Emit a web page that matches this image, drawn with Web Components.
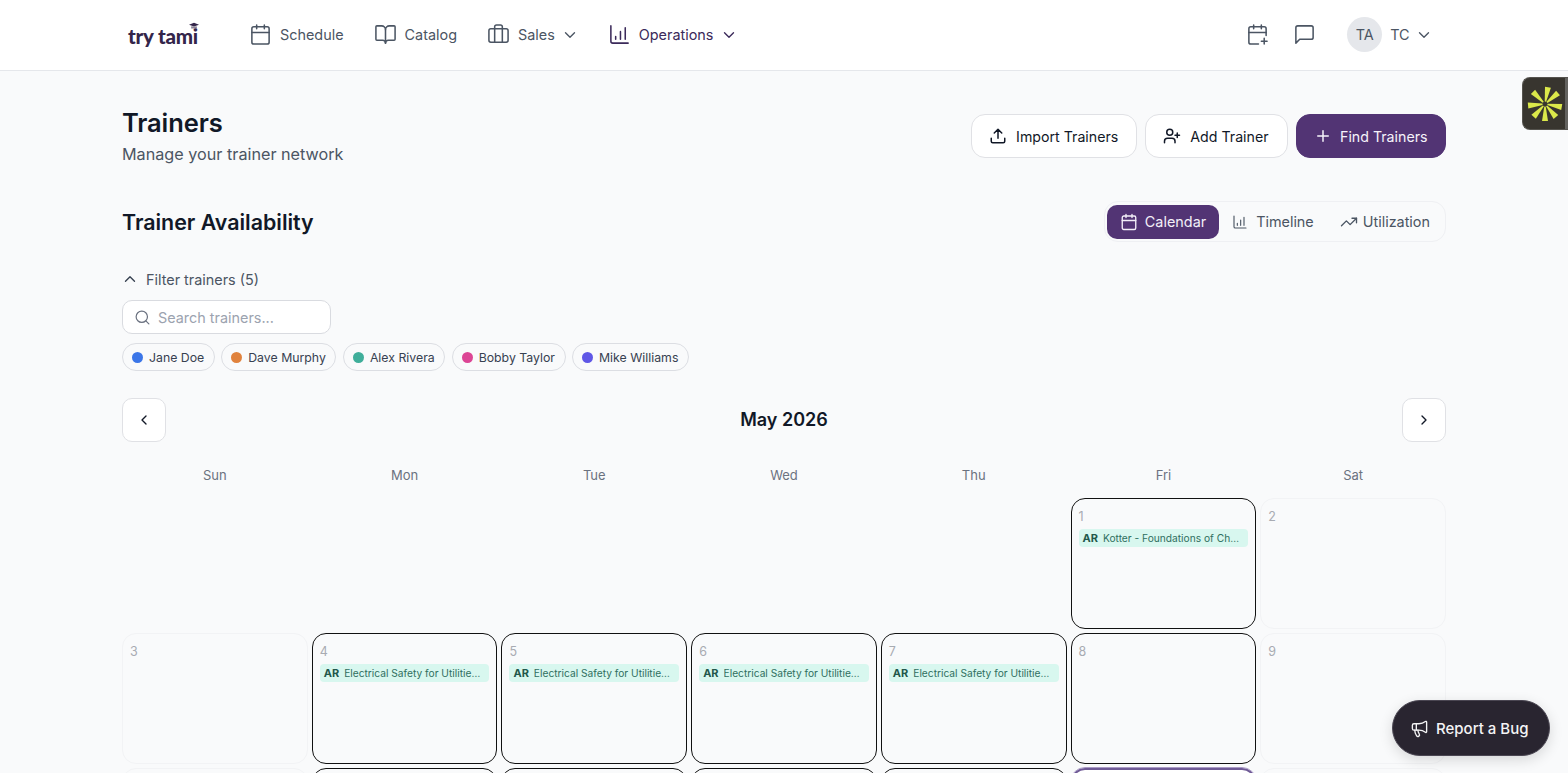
<!DOCTYPE html>
<html>
<head>
<meta charset="utf-8">
<title>Trainers</title>
<style>
  html, body { margin: 0; height: 100%; overflow: hidden; background: #f9fafb; }
  body { font-family: Inter, "Liberation Sans", sans-serif; color: #111827; position: relative; }
</style>
</head>
<body>
<app-header></app-header>
<main-page></main-page>
<side-widget></side-widget>
<bug-button></bug-button>

<script>
// shared icon paths, all on a 24 box with stroke
const ICONS = {
  calendar: '<path d="M8 2v4M16 2v4"/><rect x="3" y="4" width="18" height="18" rx="2"/><path d="M3 10h18"/>',
  calendarPlus: '<path d="M8 2v4M16 2v4"/><path d="M21 13V6a2 2 0 0 0-2-2H5a2 2 0 0 0-2 2v14a2 2 0 0 0 2 2h8"/><path d="M3 10h18M16 19h6M19 16v6"/>',
  book: '<path d="M12 7v14"/><path d="M3 18a1 1 0 0 1-1-1V4a1 1 0 0 1 1-1h5a4 4 0 0 1 4 4 4 4 0 0 1 4-4h5a1 1 0 0 1 1 1v13a1 1 0 0 1-1 1h-6a3 3 0 0 0-3 3 3 3 0 0 0-3-3z"/>',
  briefcase: '<path d="M16 20V4a2 2 0 0 0-2-2h-4a2 2 0 0 0-2 2v16"/><rect x="2" y="6" width="20" height="14" rx="2"/>',
  chart: '<path d="M3 3v16a2 2 0 0 0 2 2h16"/><path d="M8 17v-3M13 17V9M18 17V5"/>',
  chevronDown: '<path d="m6 9 6 6 6-6"/>',
  chevronUp: '<path d="m18 15-6-6-6 6"/>',
  chevronLeft: '<path d="m15 18-6-6 6-6"/>',
  chevronRight: '<path d="m9 18 6-6-6-6"/>',
  message: '<path d="M21 15a2 2 0 0 1-2 2H7l-4 4V5a2 2 0 0 1 2-2h14a2 2 0 0 1 2 2z"/>',
  upload: '<path d="M21 15v4a2 2 0 0 1-2 2H5a2 2 0 0 1-2-2v-4"/><path d="m17 8-5-5-5 5M12 3v12"/>',
  userPlus: '<path d="M16 21v-2a4 4 0 0 0-4-4H6a4 4 0 0 0-4 4v2"/><circle cx="9" cy="7" r="4"/><path d="M19 8v6M22 11h-6"/>',
  plus: '<path d="M5 12h14M12 5v14"/>',
  trending: '<path d="m22 7-8.5 8.5-5-5L2 17"/><path d="M16 7h6v6"/>',
  search: '<circle cx="11" cy="11" r="8"/><path d="m21 21-4.3-4.3"/>',
  megaphone: '<path d="M11 6a13 13 0 0 0 8.4-2.8A1 1 0 0 1 21 4v12a1 1 0 0 1-1.6.8A13 13 0 0 0 11 14H5a2 2 0 0 1-2-2V8a2 2 0 0 1 2-2z"/><path d="M6 14a12 12 0 0 0 2.4 7.2 2 2 0 0 0 3.2-2.4A8 8 0 0 1 10 14"/><path d="M8 6v8"/>'
};

class UiIcon extends HTMLElement {
  connectedCallback() {
    const size = this.getAttribute('size') || 16;
    const sw = this.getAttribute('stroke') || 2;
    this.attachShadow({ mode: 'open' }).innerHTML = `
      <style>:host { display: inline-flex; flex: none; } svg { display: block; }</style>
      <svg xmlns="http://www.w3.org/2000/svg" width="${size}" height="${size}" viewBox="0 0 24 24" fill="none"
        stroke="currentColor" stroke-width="${sw}" stroke-linecap="round" stroke-linejoin="round">${ICONS[this.getAttribute('name')]}</svg>`;
  }
}
customElements.define('ui-icon', UiIcon);

class NavItem extends HTMLElement {
  connectedCallback() {
    const menu = this.hasAttribute('menu');
    this.attachShadow({ mode: 'open' }).innerHTML = `
      <style>
        :host { display: flex; align-items: center; gap: 8px; color: #4b5563; font-size: 14.4px; margin-top: -1px; }
        :host([active]) { color: #3b2a5a; }
        .chev { margin: 0 -1.5px 0 -1.5px; }
      </style>
      <ui-icon name="${this.getAttribute('icon')}" size="23" stroke="1.6"></ui-icon>
      <slot></slot>
      ${menu ? '<ui-icon class="chev" name="chevronDown" size="18" stroke="1.8"></ui-icon>' : ''}`;
  }
}
customElements.define('nav-item', NavItem);

class AppHeader extends HTMLElement {
  connectedCallback() {
    this.attachShadow({ mode: 'open' }).innerHTML = `
      <style>
        :host { display: flex; align-items: center; height: 70px; background: #fff;
          border-bottom: 1px solid #e5e7eb; padding: 0 135px 0 128px; box-sizing: content-box; }
        .logo { position: relative; font: 900 20.5px/1 "Lato", "Open Sans", sans-serif; color: #33254a;
          letter-spacing: -.2px; width: 121px; flex: none; margin-top: 2px; }
        .cap { position: absolute; left: 61px; top: -4px; }
        nav { display: flex; gap: 30px; align-items: center; }
        .right { margin-left: auto; display: flex; align-items: center; color: #4b5563; margin-top: -1px; }
        .right .msg { margin-left: 24px; }
        .avatar { width: 35px; height: 35px; border-radius: 50%; background: #e5e7eb; display: flex;
          align-items: center; justify-content: center; font-size: 14.4px; margin-left: 31px; }
        .tc { font-size: 14.4px; margin-left: 8px; margin-right: 5.5px; }
      </style>
      <div class="logo">try tami<svg class="cap" width="10" height="8" viewBox="0 0 14 9"><path d="M7 0l7 2.6-7 2.6L0 2.6z" fill="#33254a"/><path d="M3 5h8v3H3z" fill="#8a8296"/></svg></div>
      <nav>
        <nav-item icon="calendar">Schedule</nav-item>
        <nav-item icon="book">Catalog</nav-item>
        <nav-item icon="briefcase" menu>Sales</nav-item>
        <nav-item icon="chart" menu active>Operations</nav-item>
      </nav>
      <div class="right">
        <ui-icon name="calendarPlus" size="23" stroke="1.6"></ui-icon>
        <ui-icon class="msg" name="message" size="23" stroke="1.6"></ui-icon>
        <div class="avatar">TA</div>
        <span class="tc">TC</span>
        <ui-icon name="chevronDown" size="18" stroke="1.8"></ui-icon>
      </div>`;
  }
}
customElements.define('app-header', AppHeader);

class ActionButton extends HTMLElement {
  connectedCallback() {
    this.attachShadow({ mode: 'open' }).innerHTML = `
      <style>
        :host { display: inline-flex; align-items: center; gap: 9px; height: 44px; box-sizing: border-box;
          padding: 0 18px 0 17px; border-radius: 14px; border: 1px solid #e0e1e5; background: #fff;
          color: #111827; font-size: 14.2px; font-weight: 400; white-space: nowrap; }
        :host([primary]) { background: #523474; border-color: #523474; color: #f6f3fa; padding: 0 17.5px; gap: 8px; }
      </style>
      <ui-icon name="${this.getAttribute('icon')}" size="18"></ui-icon>
      <slot></slot>`;
  }
}
customElements.define('action-button', ActionButton);

class ViewToggle extends HTMLElement {
  connectedCallback() {
    this.attachShadow({ mode: 'open' }).innerHTML = `
      <style>
        :host { display: flex; align-items: center; height: 41px; box-sizing: border-box; padding: 0 2px;
          border: 1px solid #eff0f3; border-radius: 14px; background: #f9fafb; }
        .opt { display: flex; align-items: center; height: 34px; padding: 0 13px; border-radius: 10px;
          font-size: 14.4px; color: #4b5563; }
        .on { background: #523474; color: #f3eff8; gap: 7px; }
        .tl { gap: 8px; }
        .ut { gap: 5px; }
      </style>
      <div class="opt on"><ui-icon name="calendar" size="18" stroke="1.8"></ui-icon>Calendar</div>
      <div class="opt tl"><ui-icon name="chart" size="16" stroke="1.7"></ui-icon>Timeline</div>
      <div class="opt ut"><ui-icon name="trending" size="18" stroke="1.8"></ui-icon>Utilization</div>`;
  }
}
customElements.define('view-toggle', ViewToggle);

class TrainerChip extends HTMLElement {
  connectedCallback() {
    this.attachShadow({ mode: 'open' }).innerHTML = `
      <style>
        :host { display: inline-flex; align-items: center; gap: 6px; height: 28px; box-sizing: border-box;
          padding: 0 9.5px 0 9px; border: 1px solid #dcdee3; border-radius: 14px; font-size: 12.3px; color: #374151;
          white-space: nowrap; }
        i { width: 11px; height: 11px; border-radius: 50%; background: ${this.getAttribute('color')}; }
      </style>
      <i></i><slot></slot>`;
  }
}
customElements.define('trainer-chip', TrainerChip);

class RoundButton extends HTMLElement {
  connectedCallback() {
    this.attachShadow({ mode: 'open' }).innerHTML = `
      <style>
        :host { display: flex; align-items: center; justify-content: center; width: 44px; height: 44px;
          box-sizing: border-box; border: 1px solid #e0e1e5; border-radius: 10px; background: #fff; color: #111827; }
      </style>
      <ui-icon name="${this.getAttribute('icon')}" size="16"></ui-icon>`;
  }
}
customElements.define('round-button', RoundButton);

class DayCell extends HTMLElement {
  connectedCallback() {
    const ev = this.getAttribute('event');
    this.attachShadow({ mode: 'open' }).innerHTML = `
      <style>
        :host { display: block; height: 131px; box-sizing: border-box; border: 1px solid #f2f3f5; border-radius: 14px;
          padding: 10px 7px 0 7px; overflow: hidden; min-width: 0; }
        :host([avail]) { border: 1.5px solid #111; }
        :host([today]) { border: 2px solid #6f5a96; outline: 1px solid #a999c6; background: #fff; }
        :host([blank]) { border-color: transparent; }
        .num { font-size: 12.5px; line-height: 15px; color: #a8abb2; }
        .ev { display: flex; align-items: center; gap: 5px; margin-top: 5px; height: 18px; padding: 0 4px; border-radius: 4px;
          background: #d8f7ef; color: #2f6f60; font-size: 10.2px; white-space: nowrap; overflow: hidden; }
        b { font-weight: 700; font-size: 11px; color: #22574b; flex: none; }
        span { overflow: hidden; text-overflow: ellipsis; }
      </style>
      <div class="num">${this.getAttribute('day') || ''}</div>
      ${ev ? `<div class="ev"><b>AR</b><span>${ev}</span></div>` : ''}`;
  }
}
customElements.define('day-cell', DayCell);

class MonthCalendar extends HTMLElement {
  connectedCallback() {
    const names = ['Sun', 'Mon', 'Tue', 'Wed', 'Thu', 'Fri', 'Sat'];
    const elec = 'Electrical Safety for Utilities Workers';
    const cells = [
      ...Array(5).fill('<day-cell blank></day-cell>'),
      '<day-cell day="1" avail event="Kotter - Foundations of Change Leadership"></day-cell>',
      '<day-cell day="2"></day-cell>',
      '<day-cell day="3"></day-cell>',
      ...[4, 5, 6, 7].map(d => `<day-cell day="${d}" avail event="${elec}"></day-cell>`),
      '<day-cell day="8" avail></day-cell>',
      '<day-cell day="9"></day-cell>',
      '<day-cell day="10"></day-cell>',
      ...[11, 12, 13, 14].map(d => `<day-cell day="${d}" avail></day-cell>`),
      '<day-cell day="15" avail today></day-cell>',
      '<day-cell day="16"></day-cell>'
    ];
    this.attachShadow({ mode: 'open' }).innerHTML = `
      <style>
        :host { display: block; }
        .bar { display: flex; align-items: center; justify-content: space-between; height: 44px; }
        h3 { margin: -2px 0 0; font-size: 18px; font-weight: 600; color: #111827; }
        .grid { display: grid; grid-template-columns: repeat(7, minmax(0, 1fr)); column-gap: 4px; row-gap: 4px; }
        .names { margin-top: 25px; height: 31px; }
        .names div { text-align: center; font-size: 13px; line-height: 16px; color: #6b7280; }
      </style>
      <div class="bar">
        <round-button icon="chevronLeft"></round-button>
        <h3>May 2026</h3>
        <round-button icon="chevronRight"></round-button>
      </div>
      <div class="grid names">${names.map(n => `<div>${n}</div>`).join('')}</div>
      <div class="grid">${cells.join('')}</div>`;
  }
}
customElements.define('month-calendar', MonthCalendar);

class MainPage extends HTMLElement {
  connectedCallback() {
    this.attachShadow({ mode: 'open' }).innerHTML = `
      <style>
        :host { display: block; padding: 43px 122px 0; }
        .head { display: flex; justify-content: space-between; align-items: flex-start; }
        .title { margin-top: -7px; }
        h1 { margin: 0; font-size: 25.5px; line-height: 32px; font-weight: 600; color: #111827; letter-spacing: -.1px; }
        .sub { font-size: 16.2px; line-height: 24px; color: #4b5563; margin-top: 3px; }
        .actions { display: flex; gap: 8px; }
        .section { display: flex; justify-content: space-between; align-items: center; margin-top: 35px; }
        h2 { margin: 0; font-size: 21.4px; font-weight: 600; color: #111827; }
        .filter { display: flex; align-items: center; gap: 7.5px; margin-top: 27px; height: 20px; font-size: 14.4px; color: #4b5563; }
        .filter ui-icon { color: #374151; margin-left: -1.5px; }
        .search { display: flex; align-items: center; gap: 7px; width: 209px; height: 34px; box-sizing: border-box; margin-top: 11px;
          padding: 0 11px; border: 1px solid #d9dbe0; border-radius: 10px; background: #fff; font-size: 14.4px; color: #9ca3af; }
        .search ui-icon { color: #6b7280; }
        .chips { display: flex; gap: 6.5px; margin-top: 9px; }
        month-calendar { margin-top: 27px; }
      </style>
      <div class="head">
        <div class="title">
          <h1>Trainers</h1>
          <div class="sub">Manage your trainer network</div>
        </div>
        <div class="actions">
          <action-button icon="upload">Import Trainers</action-button>
          <action-button icon="userPlus">Add Trainer</action-button>
          <action-button icon="plus" primary>Find Trainers</action-button>
        </div>
      </div>
      <div class="section">
        <h2>Trainer Availability</h2>
        <view-toggle></view-toggle>
      </div>
      <div class="filter"><ui-icon name="chevronUp" size="18" stroke="1.8"></ui-icon>Filter trainers (5)</div>
      <div class="search"><ui-icon name="search" size="17" stroke="1.7"></ui-icon>Search trainers...</div>
      <div class="chips">
        <trainer-chip color="#3b76e8">Jane Doe</trainer-chip>
        <trainer-chip color="#e0823d">Dave Murphy</trainer-chip>
        <trainer-chip color="#3fae9a">Alex Rivera</trainer-chip>
        <trainer-chip color="#dc4595">Bobby Taylor</trainer-chip>
        <trainer-chip color="#5f57e6">Mike Williams</trainer-chip>
      </div>
      <month-calendar></month-calendar>`;
  }
}
customElements.define('main-page', MainPage);

// floating bits that sit over the page
class SideWidget extends HTMLElement {
  connectedCallback() {
    const rays = [10, 50, 100, 140, 180, 222, 265, 315].map(a =>
      `<path d="M-.7 -2.5 L.7 -2.5 L3 -17 L-3 -17 Z" transform="rotate(${a})" fill="#dbe84a"/>`).join('');
    this.attachShadow({ mode: 'open' }).innerHTML = `
      <style>
        :host { position: absolute; left: 1522px; top: 77px; width: 46px; height: 53px; box-sizing: border-box;
          background: linear-gradient(to right, #38352f 93%, #63625f 93%); border-radius: 8px 0 0 8px;
          border: 1px solid #55534e; border-right: 0; display: flex; align-items: center; padding-left: 4px; }
      </style>
      <svg width="36" height="36" viewBox="-18 -18 36 36">${rays}</svg>`;
  }
}
customElements.define('side-widget', SideWidget);

class BugButton extends HTMLElement {
  connectedCallback() {
    this.attachShadow({ mode: 'open' }).innerHTML = `
      <style>
        :host { position: absolute; left: 1392px; top: 700px; width: 158px; height: 56px; box-sizing: border-box;
          display: flex; align-items: center; gap: 7px; padding-left: 17px; border-radius: 28px; background: #292530;
          border: 1px solid #4a4652; color: #f4f4f5; font-size: 15px; font-weight: 500;
          box-shadow: 0 4px 14px rgba(0,0,0,.14); }
      </style>
      <ui-icon name="megaphone" size="19" stroke="1.7"></ui-icon>Report a Bug`;
  }
}
customElements.define('bug-button', BugButton);
</script>
</body>
</html>
